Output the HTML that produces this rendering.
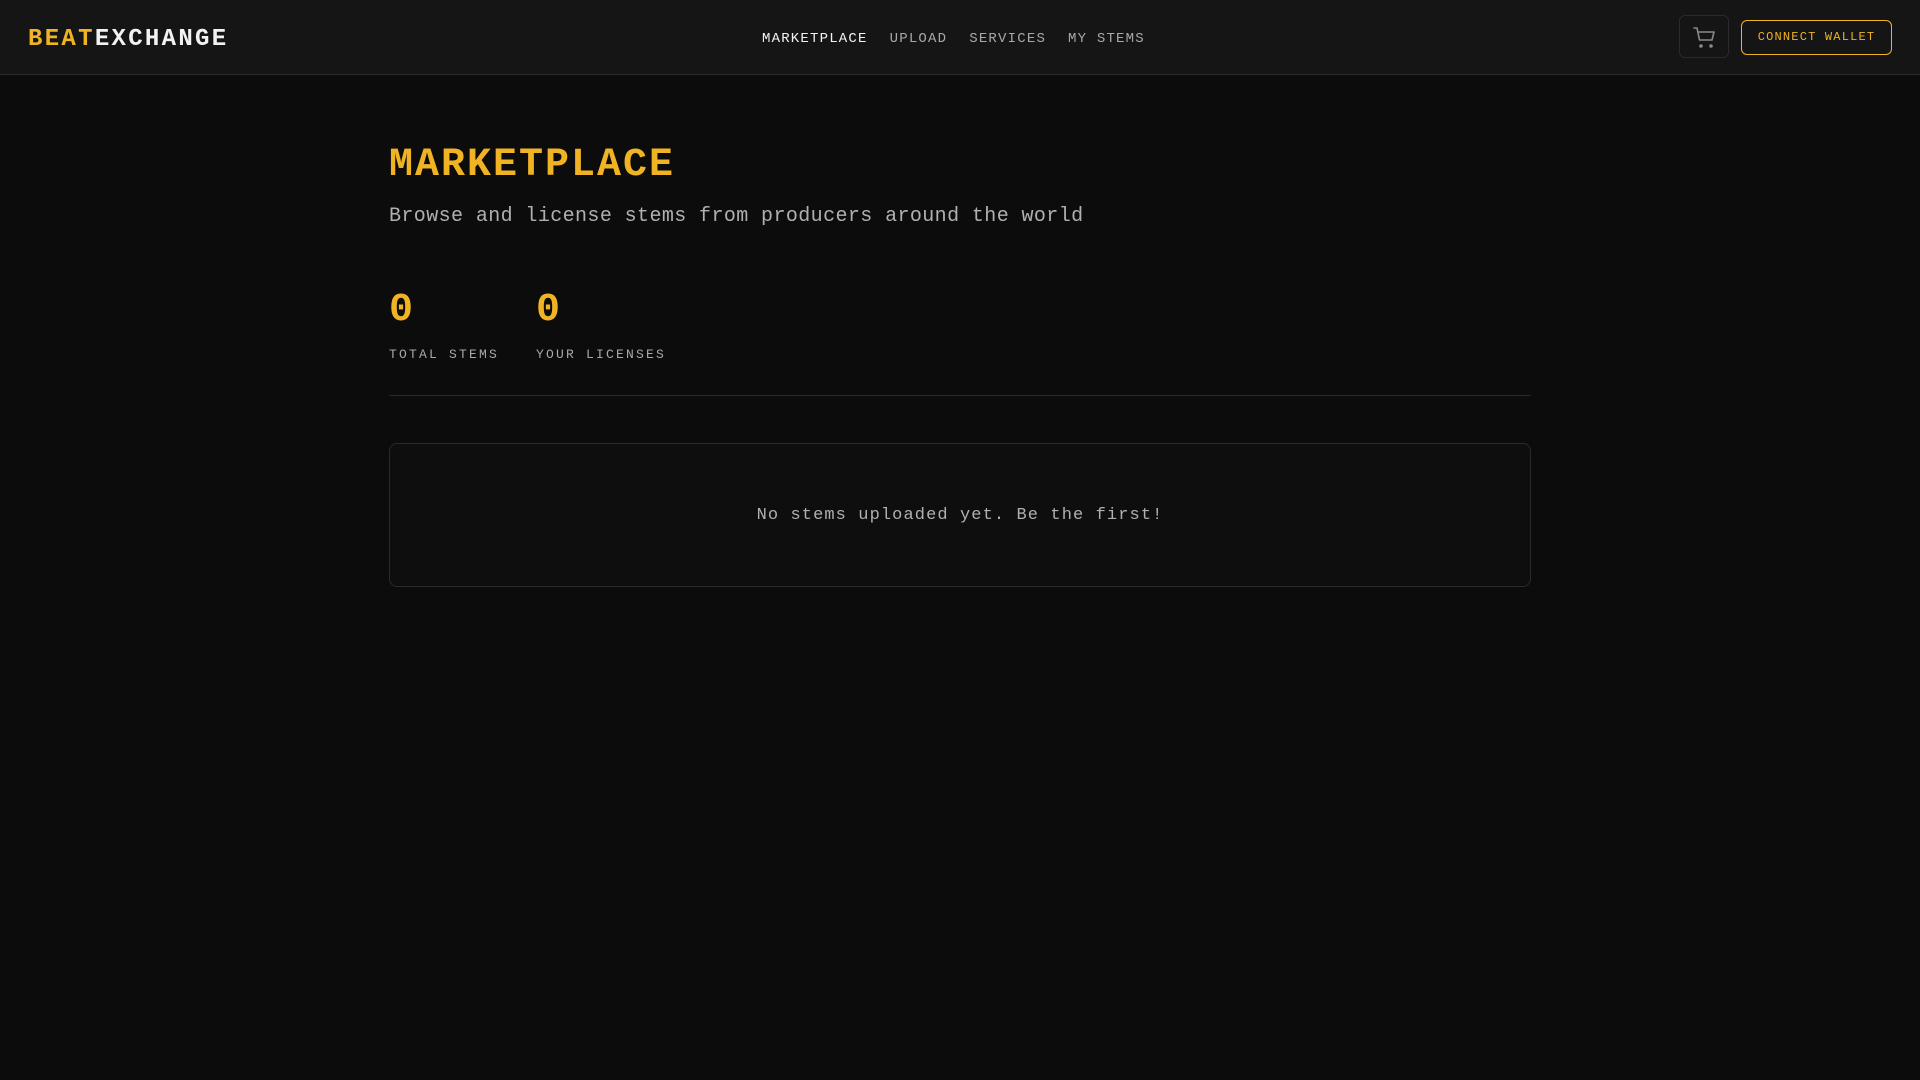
<!DOCTYPE html>
<html><head><meta charset="utf-8"><style>
*{margin:0;padding:0;box-sizing:border-box}
body{width:1920px;height:1080px;background:#0c0c0c;font-family:"Liberation Mono",monospace;color:#b5b5b5;overflow:hidden;position:relative}
header{position:absolute;left:0;top:0;width:1920px;height:75px;background:#151515;border-bottom:1px solid #2a2a2a}
.logo{position:absolute;left:28px;top:26px;font-size:24px;font-weight:bold;letter-spacing:2.3px;color:#f2f2f2}
.logo span{color:#f0b323}
nav{position:absolute;left:762px;top:31px;font-size:14px;letter-spacing:1.2px;white-space:nowrap}
nav a{color:#a8a8a8;text-decoration:none;margin-right:22px}
nav a.on{color:#f2f2f2}
.cart{position:absolute;left:1679px;top:15px;width:50px;height:43px;border:1px solid #2a2a2a;border-radius:6px}
.cart svg{position:absolute;left:13px;top:10px}
.wallet{position:absolute;left:1741px;top:20px;width:151px;height:35px;border:1.5px solid #f0b323;border-radius:6px;color:#f0b323;font-size:12px;letter-spacing:1.2px;text-align:center;line-height:32px}
.t{position:absolute;left:389px}
h1{position:absolute;left:389px;top:143px;font-size:40px;letter-spacing:2px;color:#f0b323;font-weight:bold}
.sub{top:205px;font-size:20px;letter-spacing:0.4px;color:#b0b0b0}
.num{top:288px;font-size:40px;font-weight:bold;color:#f0b323}
.lab{top:347px;font-size:13px;letter-spacing:2.2px;color:#a8a8a8}
.div{position:absolute;left:389px;top:395px;width:1142px;height:1px;background:#2a2a2a}
.box{position:absolute;left:389px;top:443px;width:1142px;height:144px;border:1px solid #2a2a2a;border-radius:8px;background:#0e0e0e;text-align:center;line-height:144px;font-size:17px;letter-spacing:1.1px;color:#b0b0b0}
</style></head><body>
<header>
<div class="logo"><span>BEAT</span>EXCHANGE</div>
<nav><a class="on">MARKETPLACE</a><a>UPLOAD</a><a>SERVICES</a><a>MY STEMS</a></nav>
<div class="cart"><svg width="24" height="24" viewBox="0 0 24 24" fill="none" stroke="#8a8a8a" stroke-width="1.6" stroke-linecap="round" stroke-linejoin="round"><path d="M1 2h3l2.5 12h12.5l2-8H5.5"/><circle cx="8" cy="20" r="1" fill="#8a8a8a"/><circle cx="18" cy="20" r="1" fill="#8a8a8a"/></svg></div>
<div class="wallet">CONNECT WALLET</div>
</header>
<h1>MARKETPLACE</h1>
<div class="t sub">Browse and license stems from producers around the world</div>
<div class="t num">0</div>
<div class="t num" style="left:536px">0</div>
<div class="t lab">TOTAL STEMS</div>
<div class="t lab" style="left:536px">YOUR LICENSES</div>
<div class="div"></div>
<div class="box">No stems uploaded yet. Be the first!</div>
</body></html>
